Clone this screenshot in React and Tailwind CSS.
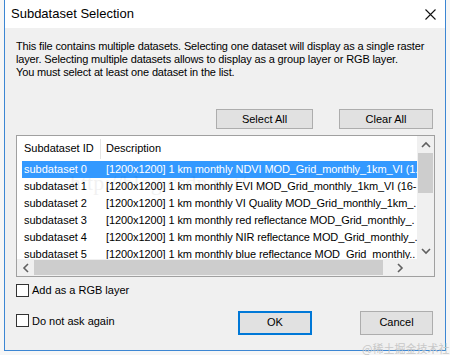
import React from "react";

const rows = [
  ["subdataset 0", "[1200x1200] 1 km monthly NDVI MOD_Grid_monthly_1km_VI (1."],
  ["subdataset 1", "[1200x1200] 1 km monthly EVI MOD_Grid_monthly_1km_VI (16-."],
  ["subdataset 2", "[1200x1200] 1 km monthly VI Quality MOD_Grid_monthly_1km_."],
  ["subdataset 3", "[1200x1200] 1 km monthly red reflectance MOD_Grid_monthly_."],
  ["subdataset 4", "[1200x1200] 1 km monthly NIR reflectance MOD_Grid_monthly_."],
  ["subdataset 5", "[1200x1200] 1 km monthly blue reflectance MOD_Grid_monthly.."],
];

function Chevron({ dir }) {
  const paths = {
    up: "M1 6 L5 2 L9 6",
    down: "M1 2 L5 6 L9 2",
    left: "M6 1 L2 5 L6 9",
    right: "M2 1 L6 5 L2 9",
  };
  const vert = dir === "up" || dir === "down";
  return (
    <svg width={vert ? 10 : 8} height={vert ? 8 : 10} viewBox={vert ? "0 0 10 8" : "0 0 8 10"}>
      <path d={paths[dir]} fill="none" stroke="#606060" strokeWidth="1.6" />
    </svg>
  );
}

function Checkbox({ label }) {
  return (
    <div className="flex items-center">
      <div className="w-[13px] h-[13px] border border-[#333333] bg-white" />
      <span className="ml-[3px]">{label}</span>
    </div>
  );
}

export default function App() {
  return (
    <div
      className="relative w-[450px] h-[355px] bg-[#f6f6f6] pl-[4px] text-[11px] text-black overflow-hidden"
      style={{ fontFamily: '"Liberation Sans", Arial, sans-serif' }}
    >
      <div className="w-[442px] h-[351px] border-x border-b border-[#3c86d3] bg-[#f0f0f0] flex flex-col">
        <div className="h-[28px] bg-white flex items-center justify-between pl-[6px] pr-[9px] shrink-0">
          <span className="text-[13px]">Subdataset Selection</span>
          <svg width="11" height="11" viewBox="0 0 11 11">
            <path d="M0.5 0.5 L10.5 10.5 M10.5 0.5 L0.5 10.5" stroke="#111" strokeWidth="1.1" fill="none" />
          </svg>
        </div>
        <div className="flex-1 pl-[11px] pr-[10px] flex flex-col">
          <p className="mt-[12px] leading-[13px] text-[11px] whitespace-nowrap tracking-[-0.15px]">
            This file contains multiple datasets. Selecting one dataset will display as a single raster
            <br />
            layer. Selecting multiple datasets allows to display as a group layer or RGB layer.
            <br />
            You must select at least one dataset in the list.
          </p>
          <div className="mt-[30px] flex justify-end gap-[26px] pr-[2px]">
            <button className="w-[97px] h-[20px] bg-[#e1e1e1] border border-[#adadad] leading-none">Select All</button>
            <button className="w-[94px] h-[20px] bg-[#e1e1e1] border border-[#adadad] leading-none">Clear All</button>
          </div>
          <div className="mt-[6px] h-[142px] border border-[#a0a0a0] bg-white flex flex-col">
            <div className="flex-1 flex min-h-0">
              <div className="flex-1 min-w-0 overflow-hidden pl-[5px]">
                <div className="h-[25px] flex items-center">
                  <div className="w-[78px] pl-[2px] h-full flex items-center">Subdataset ID</div>
                  <div className="w-px h-[20px] bg-[#e5e5e5]" />
                  <div className="pl-[5px]">Description</div>
                </div>
                {rows.map(([id, desc], i) => (
                  <div
                    key={id}
                    className={`h-[17px] flex items-center whitespace-nowrap ${i === 0 ? "bg-[#3399ff] text-white" : ""}`}
                  >
                    <div className="w-[84px] pl-[2px] shrink-0">{id}</div>
                    <div className="shrink-0 tracking-[-0.1px]">{desc}</div>
                  </div>
                ))}
              </div>
              <div className="w-[17px] bg-[#f0f0f0] flex flex-col items-center">
                <div className="h-[17px] flex items-center justify-center"><Chevron dir="up" /></div>
                <div className="w-[15px] h-[40px] bg-[#cdcdcd]" />
                <div className="flex-1" />
                <div className="h-[17px] flex items-center justify-center"><Chevron dir="down" /></div>
              </div>
            </div>
            <div className="h-[17px] flex bg-[#f0f0f0] shrink-0">
              <div className="w-[17px] flex items-center justify-center"><Chevron dir="left" /></div>
              <div className="w-[349px] my-[1px] bg-[#cdcdcd]" />
              <div className="flex-1 flex items-center justify-center"><Chevron dir="right" /></div>
              <div className="w-[17px] bg-[#f0f0f0]" />
            </div>
          </div>
          <div className="mt-[5px]">
            <Checkbox label="Add as a RGB layer" />
          </div>
          <div className="mt-[12px] flex items-start">
            <div className="mt-[2px] w-[222px]">
              <Checkbox label="Do not ask again" />
            </div>
            <button className="w-[74px] h-[24px] bg-[#e1e1e1] border-2 border-[#0078d7] leading-none">OK</button>
            <button className="ml-[48px] w-[73px] h-[24px] bg-[#e1e1e1] border border-[#adadad] leading-none">Cancel</button>
          </div>
        </div>
      </div>
      <div
        className="absolute left-[70px] top-[166px] text-[22px] text-[#000000] opacity-[0.05] pointer-events-none whitespace-nowrap"
        style={{ fontFamily: '"Liberation Serif", serif' }}
      >
        http://blog.csdn.net/
      </div>
      <div
        className="absolute left-[362px] top-[340px] text-[11px] text-[#c8c8c8] whitespace-nowrap"
        style={{ fontFamily: '"Noto Sans CJK SC", sans-serif' }}
      >
        @稀土掘金技术社区
      </div>
    </div>
  );
}
